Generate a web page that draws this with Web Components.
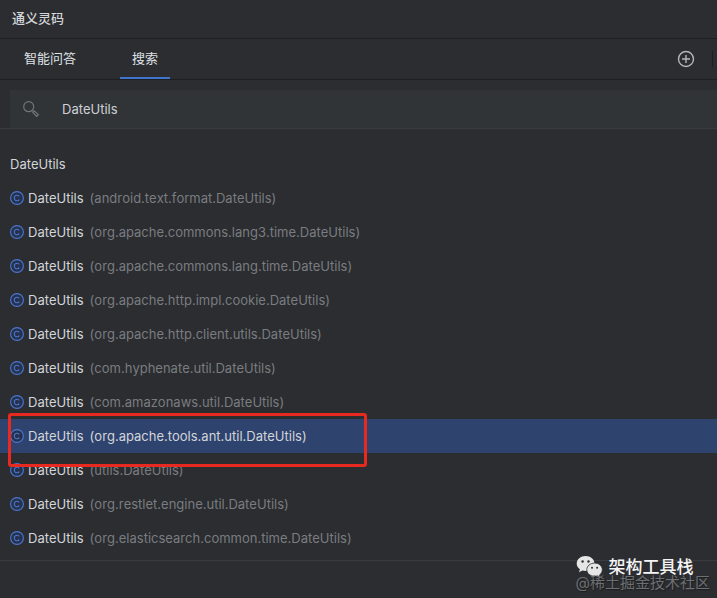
<!DOCTYPE html>
<html lang="zh-CN">
<head>
<meta charset="utf-8">
<meta name="viewport" content="width=device-width, initial-scale=1">
<title>通义灵码</title>
<style>
  body {
    margin: 0;
    background: #2b2d30;
    color: #d3d5d9;
    font: 13px/18px Inter, "Noto Sans CJK SC", sans-serif;
    font-kerning: none;
  }
</style>
</head>
<body>
<tool-window heading="通义灵码">
  <tab-bar slot="tabs">
    <tab-item>智能问答</tab-item>
    <tab-item active>搜索</tab-item>
  </tab-bar>
  <search-field slot="search" value="DateUtils"></search-field>
  <result-list heading="DateUtils">
    <result-item name="DateUtils">(android.text.format.DateUtils)</result-item>
    <result-item name="DateUtils">(org.apache.commons.lang3.time.DateUtils)</result-item>
    <result-item name="DateUtils">(org.apache.commons.lang.time.DateUtils)</result-item>
    <result-item name="DateUtils">(org.apache.http.impl.cookie.DateUtils)</result-item>
    <result-item name="DateUtils">(org.apache.http.client.utils.DateUtils)</result-item>
    <result-item name="DateUtils">(com.hyphenate.util.DateUtils)</result-item>
    <result-item name="DateUtils">(com.amazonaws.util.DateUtils)</result-item>
    <result-item name="DateUtils" selected>(org.apache.tools.ant.util.DateUtils)</result-item>
    <result-item name="DateUtils">(utils.DateUtils)</result-item>
    <result-item name="DateUtils">(org.restlet.engine.util.DateUtils)</result-item>
    <result-item name="DateUtils">(org.elasticsearch.common.time.DateUtils)</result-item>
  </result-list>
  <water-mark slot="mark" account="架构工具栈">@稀土掘金技术社区</water-mark>
</tool-window>

<script>
// Outer panel: title, tabs, search box, results and the empty footer
class ToolWindow extends HTMLElement {
  constructor() {
    super();
    this.attachShadow({ mode: 'open' });
  }

  connectedCallback() {
    this.shadowRoot.innerHTML = `
      <style>
        :host {
          display: flex;
          flex-direction: column;
          position: relative;
          min-height: 100vh;
          overflow: hidden;
        }
        h1 {
          margin: 0;
          padding: 9px 12px 11px;
          border-bottom: 1px solid #1e1f22;
          font-size: 13px;
          line-height: 18px;
          font-weight: 500;
        }
        main { padding-bottom: 5px; }
        footer {
          flex: 1;
          border-top: 1px solid #393b40;
        }
      </style>
      <h1>${this.getAttribute('heading')}</h1>
      <slot name="tabs"></slot>
      <slot name="search"></slot>
      <main><slot></slot></main>
      <footer></footer>
      <slot name="mark"></slot>
    `;
  }
}

class TabBar extends HTMLElement {
  constructor() {
    super();
    this.attachShadow({ mode: 'open' });
  }

  connectedCallback() {
    this.shadowRoot.innerHTML = `
      <style>
        :host {
          display: flex;
          align-items: center;
          height: 40px;
          border-bottom: 1px solid #1e1f22;
        }
        nav {
          display: flex;
          flex: 1;
          align-self: stretch;
          gap: 32px;
          padding-left: 12px;
        }
        .add {
          display: flex;
          padding: 0;
          border: 0;
          background: none;
          color: #b4b6ba;
        }
        .divider {
          width: 1px;
          height: 16px;
          margin: 0 4px 0 17px;
          background: #1e1f22;
        }
      </style>
      <nav><slot></slot></nav>
      <button class="add" type="button" aria-label="新建">
        <svg width="18" height="18" viewBox="0 0 18 18" fill="none" stroke="currentColor" stroke-width="1.4">
          <circle cx="9" cy="9" r="7.5"/>
          <path d="M9 5v8M5 9h8"/>
        </svg>
      </button>
      <span class="divider"></span>
    `;
  }
}

class TabItem extends HTMLElement {
  constructor() {
    super();
    this.attachShadow({ mode: 'open' });
  }

  connectedCallback() {
    this.shadowRoot.innerHTML = `
      <style>
        :host { display: flex; }
        button {
          padding: 0 12px;
          border: 0;
          border-bottom: 2px solid transparent;
          background: none;
          color: #dfe1e5;
          font: inherit;
        }
        :host([active]) button { border-color: #3f75cc; }
      </style>
      <button type="button"><slot></slot></button>
    `;
  }
}

class SearchField extends HTMLElement {
  constructor() {
    super();
    this.attachShadow({ mode: 'open' });
  }

  connectedCallback() {
    this.shadowRoot.innerHTML = `
      <style>
        :host {
          display: block;
          padding: 10px 0 0 10px;
          border-bottom: 1px solid #393b40;
        }
        label {
          display: flex;
          align-items: center;
          gap: 22px;
          height: 38px;
          padding-left: 12px;
          background: #313437;
        }
        input {
          flex: 1;
          min-width: 0;
          padding: 0;
          border: 0;
          outline: 0;
          background: none;
          color: #ced0d6;
          font: inherit;
          font-kerning: inherit;
        }
      </style>
      <label>
        <svg width="18" height="18" viewBox="0 0 18 18" fill="none" stroke="#727477" stroke-width="1.2">
          <circle cx="6.7" cy="6.7" r="5"/>
          <path d="M10.3 10.3l1.4 1.4M10.9 12.5l1.5-1.5 4 3.7-1.8 1.8z"/>
        </svg>
        <input type="text" aria-label="搜索" value="${this.getAttribute('value')}">
      </label>
    `;
  }
}

class ResultList extends HTMLElement {
  constructor() {
    super();
    this.attachShadow({ mode: 'open' });
  }

  connectedCallback() {
    this.shadowRoot.innerHTML = `
      <style>
        :host {
          display: block;
          padding-top: 18px;
        }
        h2 {
          margin: 0;
          padding: 0 10px;
          font-size: 13px;
          line-height: 34px;
          font-weight: 400;
        }
      </style>
      <h2>${this.getAttribute('heading')}</h2>
      <slot></slot>
    `;
  }
}

class ResultItem extends HTMLElement {
  constructor() {
    super();
    this.attachShadow({ mode: 'open' });
  }

  connectedCallback() {
    const marker = this.hasAttribute('selected') ? '<span class="marker"></span>' : '';

    this.shadowRoot.innerHTML = `
      <style>
        :host {
          display: block;
          position: relative;
          --detail: #7a7c80;
        }
        :host([selected]) {
          z-index: 1;
          background: #2e436e;
          --detail: #d3d5d9;
        }
        button {
          display: flex;
          align-items: center;
          width: 100%;
          height: 34px;
          padding: 0 10px;
          border: 0;
          background: none;
          color: inherit;
          font: inherit;
          font-kerning: inherit;
          white-space: nowrap;
        }
        svg { margin-right: 4px; }
        .name { margin-right: 6px; }
        .detail { color: var(--detail); }
        /* red frame drawn over the selected row and its neighbours */
        .marker {
          position: absolute;
          inset: -6px auto -14px 8px;
          box-sizing: border-box;
          width: 50%;
          border: 3px solid #e8291f;
          border-radius: 3px;
          pointer-events: none;
        }
      </style>
      <button type="button">
        <svg width="14" height="14" viewBox="0 0 14 14" fill="none" stroke="#4d76d3">
          <circle cx="7" cy="7" r="6.4" fill="#25324d" stroke-width="1.1"/>
          <path d="M9.3 5.3A2.8 2.8 0 1 0 9.3 8.7" stroke-width="1.1"/>
        </svg>
        <span class="name">${this.getAttribute('name')}</span>
        <span class="detail"><slot></slot></span>
      </button>
      ${marker}
    `;
  }
}

// Account name and site name laid over the bottom right corner
class WaterMark extends HTMLElement {
  constructor() {
    super();
    this.attachShadow({ mode: 'open' });
  }

  connectedCallback() {
    this.shadowRoot.innerHTML = `
      <style>
        :host {
          display: block;
          position: absolute;
          right: 7px;
          bottom: 8px;
          z-index: 2;
        }
        .account {
          display: flex;
          align-items: center;
          gap: 6px;
          height: 18px;
          color: #f5f5f5;
          font-size: 17px;
          line-height: 18px;
          font-weight: 500;
        }
        .site {
          color: #6d6f72;
          font-size: 15px;
          line-height: 14px;
          text-shadow: 1px 1px 1px #1b1c1e;
        }
      </style>
      <div class="account">
        <svg width="27" height="24" viewBox="0 0 27 24">
          <path fill="#e6e6e6" d="M9.6 1C4.6 1 .7 4.3.7 8.5c0 2.3 1.2 4.4 3.2 5.8L3 17.2l3.4-1.7c1 .3 2.1.4 3.2.4 5 0 8.9-3.3 8.9-7.4S14.6 1 9.6 1z"/>
          <path fill="#e6e6e6" stroke="#2b2d30" stroke-width=".8" d="M18.6 8.1c-4.3 0-7.8 2.9-7.8 6.6s3.5 6.6 7.8 6.6c1 0 1.9-.2 2.8-.4l2.8 1.4-.7-2.4c1.7-1.2 2.8-3.1 2.8-5.2 0-3.7-3.4-6.6-7.7-6.6z"/>
          <g fill="#2b2d30">
            <circle cx="6.6" cy="6.5" r="1.2"/>
            <circle cx="12.5" cy="6.5" r="1.2"/>
            <circle cx="16" cy="12.8" r="1"/>
            <circle cx="21.1" cy="12.8" r="1"/>
          </g>
        </svg>
        <span>${this.getAttribute('account')}</span>
      </div>
      <div class="site"><slot></slot></div>
    `;
  }
}

customElements.define('tool-window', ToolWindow);
customElements.define('tab-bar', TabBar);
customElements.define('tab-item', TabItem);
customElements.define('search-field', SearchField);
customElements.define('result-list', ResultList);
customElements.define('result-item', ResultItem);
customElements.define('water-mark', WaterMark);
</script>
</body>
</html>
